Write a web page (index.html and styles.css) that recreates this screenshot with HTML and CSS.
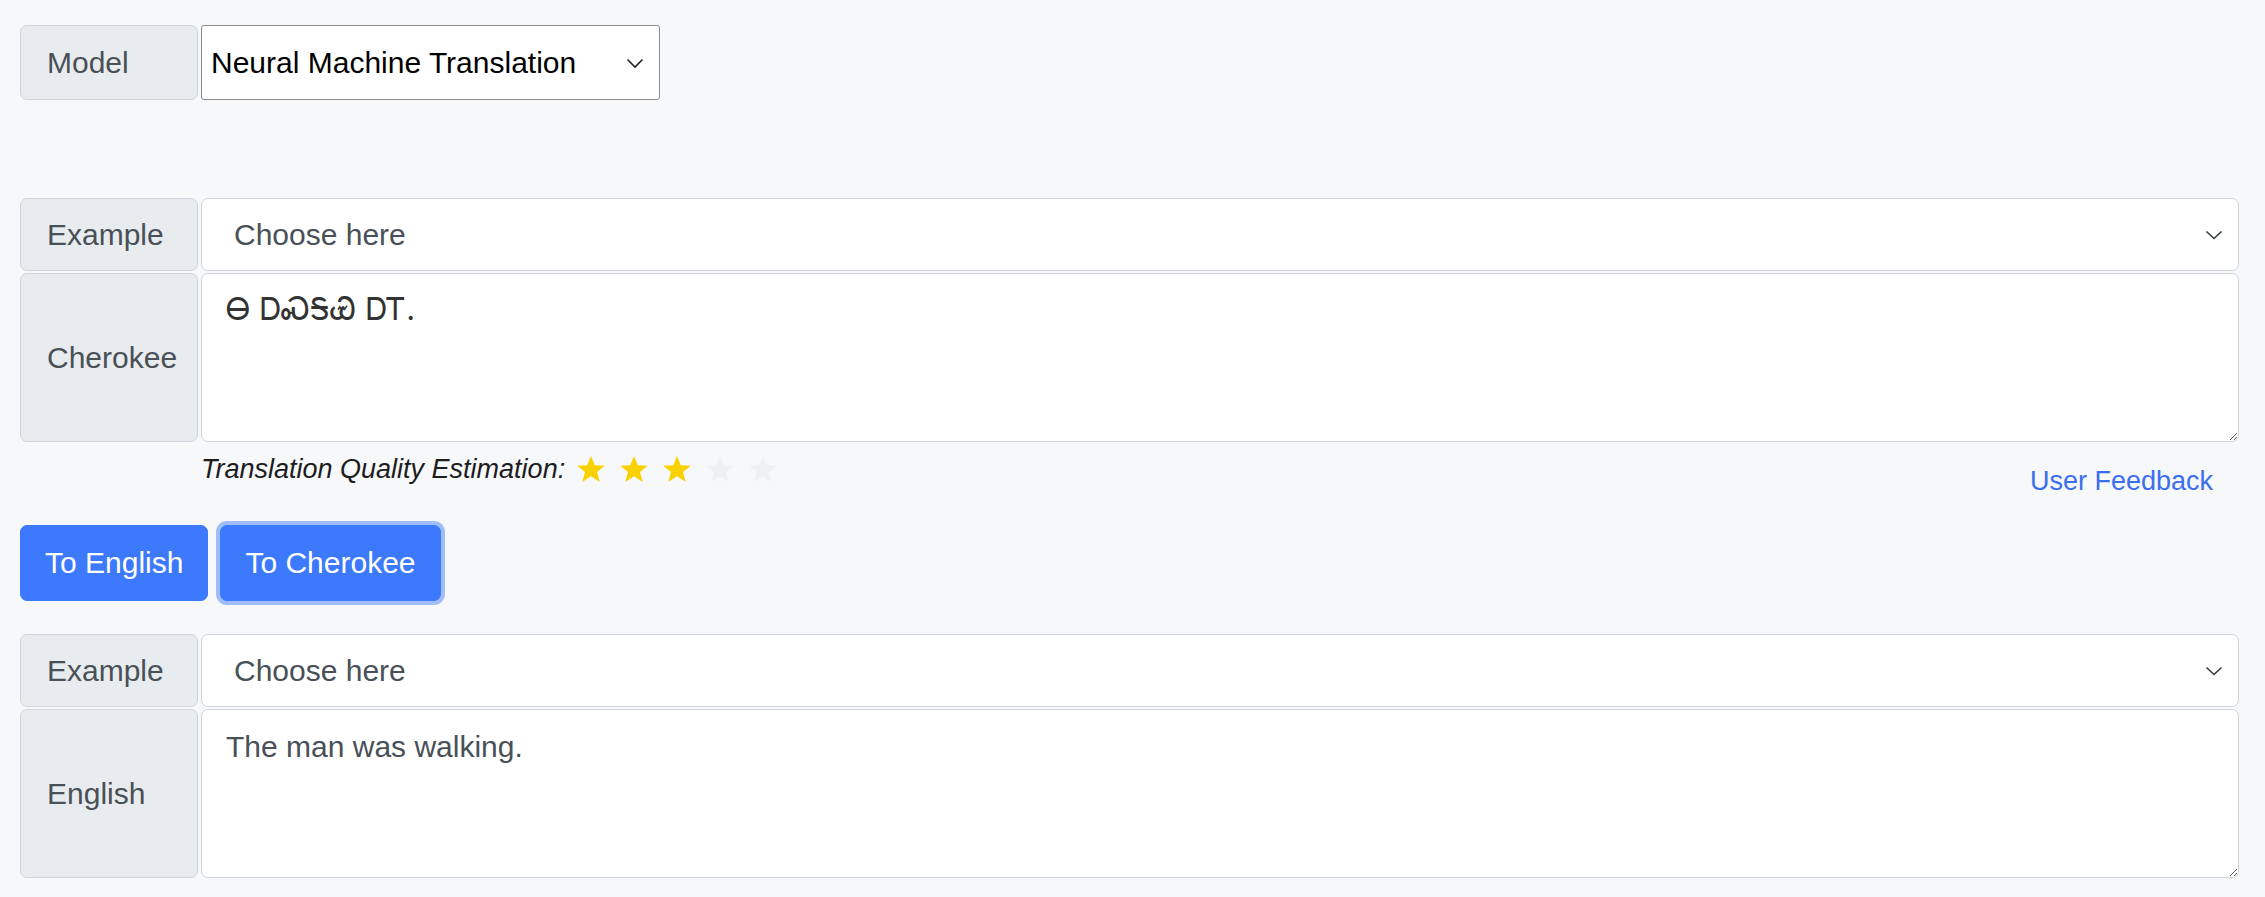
FILE: index.html
```html
<!DOCTYPE html>
<html lang="en">
<head>
    <meta charset="UTF-8">
    <meta name="viewport" content="width=device-width, initial-scale=1.0">
    <title>Cherokee English Translation</title>
    <link rel="stylesheet" href="styles.css">
</head>
<body>
    <div id="main">
        <!--Model picker-->
        <div class="group model-group">
            <span class="label model-label">Model</span>
            <div class="select-wrap model-wrap">
                <select class="model-select">
                    <option>Neural Machine Translation</option>
                </select>
                <svg class="chevron" width="18" height="11" viewBox="0 0 18 11"><path d="M1.5 1.5 L9 9 L16.5 1.5" fill="none" stroke="#222" stroke-width="1.6"/></svg>
            </div>
        </div>

        <!--Cherokee side-->
        <div class="section">
            <div class="group">
                <span class="label">Example</span>
                <div class="select-wrap">
                    <select class="form-select">
                        <option>Choose here</option>
                    </select>
                    <svg class="chevron" width="18" height="10" viewBox="0 0 18 10"><path d="M1.5 1.5 L9 8.5 L16.5 1.5" fill="none" stroke="#343a40" stroke-width="1.6"/></svg>
                </div>
            </div>
            <div class="group tall">
                <span class="label">Cherokee</span>
                <textarea class="form-control cherokee">Ꮎ ᎠᏍᎦᏯ ᎠᎢ.</textarea>
            </div>
        </div>

        <div class="quality-row">
            <div class="quality">
                <em>Translation Quality Estimation:</em>
                <span class="stars">
                    <svg class="star on" viewBox="0 0 24 24"><polygon points="12,1.5 15,9 23,9.3 16.8,14.3 19,22.3 12,17.8 5,22.3 7.2,14.3 1,9.3 9,9"/></svg>
                    <svg class="star on" viewBox="0 0 24 24"><polygon points="12,1.5 15,9 23,9.3 16.8,14.3 19,22.3 12,17.8 5,22.3 7.2,14.3 1,9.3 9,9"/></svg>
                    <svg class="star on" viewBox="0 0 24 24"><polygon points="12,1.5 15,9 23,9.3 16.8,14.3 19,22.3 12,17.8 5,22.3 7.2,14.3 1,9.3 9,9"/></svg>
                    <svg class="star off" viewBox="0 0 24 24"><polygon points="12,1.5 15,9 23,9.3 16.8,14.3 19,22.3 12,17.8 5,22.3 7.2,14.3 1,9.3 9,9"/></svg>
                    <svg class="star off" viewBox="0 0 24 24"><polygon points="12,1.5 15,9 23,9.3 16.8,14.3 19,22.3 12,17.8 5,22.3 7.2,14.3 1,9.3 9,9"/></svg>
                </span>
            </div>
            <a class="feedback" href="#">User Feedback</a>
        </div>

        <div class="actions">
            <button class="btn">To English</button>
            <button class="btn focused">To Cherokee</button>
        </div>

        <!--English side-->
        <div class="section">
            <div class="group">
                <span class="label">Example</span>
                <div class="select-wrap">
                    <select class="form-select">
                        <option>Choose here</option>
                    </select>
                    <svg class="chevron" width="18" height="10" viewBox="0 0 18 10"><path d="M1.5 1.5 L9 8.5 L16.5 1.5" fill="none" stroke="#343a40" stroke-width="1.6"/></svg>
                </div>
            </div>
            <div class="group tall">
                <span class="label">English</span>
                <textarea class="form-control">The man was walking.</textarea>
            </div>
        </div>
    </div>
</body>
</html>
```

FILE: styles.css
```css
*{
    margin: 0;
    padding: 0;
    box-sizing: border-box;
}

body{
    background-color: #f7f8fa;
    font-family: "Liberation Sans", Arial, sans-serif;
    font-size: 30px;
    color: #212529;
}

#main{
    padding: 25px 26px 0 20px;
}

.group{
    display: flex;
    height: 73px;
}

.model-group{
    height: 75px;
}

.tall{
    height: 169px;
    margin-top: 2px;
}

.label{
    display: flex;
    align-items: center;
    width: 178px;
    padding-left: 26px;
    background-color: #e9ecef;
    border: 1px solid #ced4da;
    border-radius: 7px;
    color: #495057;
    line-height: 1.5;
    flex-shrink: 0;
}

.select-wrap{
    position: relative;
    flex: 1;
    margin-left: 3px;
}

.model-wrap{
    flex: 0 0 459px;
}

select{
    appearance: none;
    -webkit-appearance: none;
    width: 100%;
    height: 100%;
    font-family: inherit;
    font-size: 30px;
    outline: none;
}

.model-select{
    padding-left: 9px;
    background-color: #fff;
    border: 1px solid #8a8a8a;
    border-radius: 3px;
    color: #000;
}

.form-select{
    padding-left: 32px;
    background-color: #fff;
    border: 1px solid #ced4da;
    border-radius: 7px;
    color: #495057;
}

.chevron{
    position: absolute;
    right: 16px;
    top: 50%;
    margin-top: -5px;
    pointer-events: none;
}

.form-control{
    flex: 1;
    margin-left: 3px;
    padding: 14px 24px;
    background-color: #fff;
    border: 1px solid #ced4da;
    border-radius: 7px;
    color: #495057;
    font-family: inherit;
    font-size: 30px;
    line-height: 1.5;
    outline: none;
}

.cherokee{
    padding-top: 12px;
    font-family: "DejaVu Serif", "Liberation Serif", serif;
    font-size: 31px;
    color: #333;
}

.section{
    margin-top: 98px;
}

.quality-row{
    display: flex;
    justify-content: space-between;
    padding-left: 181px;
    padding-right: 26px;
    margin-top: 7px;
}

.quality{
    display: flex;
    align-items: center;
    height: 40px;
    font-size: 27px;
    color: #1d1d1f;
}

.stars{
    display: flex;
    margin-left: 11px;
    gap: 13px;
}

.star{
    width: 30px;
    height: 30px;
}

.star.on{
    fill: #f8d100;
}

.star.off{
    fill: #eef0f3;
}

.feedback{
    margin-top: 17px;
    font-size: 27px;
    color: #3b6ff0;
    text-decoration: none;
}

.actions{
    display: flex;
    gap: 12px;
    margin-top: 28px;
}

.btn{
    height: 76px;
    padding: 0 24px;
    background-color: #3c79fd;
    border: 1px solid #3c79fd;
    border-radius: 7px;
    color: #fff;
    font-family: inherit;
    font-size: 30px;
}

.focused{
    box-shadow: 0 0 0 4px rgba(70, 130, 250, 0.5);
}

.actions + .section{
    margin-top: 33px;
}
```
